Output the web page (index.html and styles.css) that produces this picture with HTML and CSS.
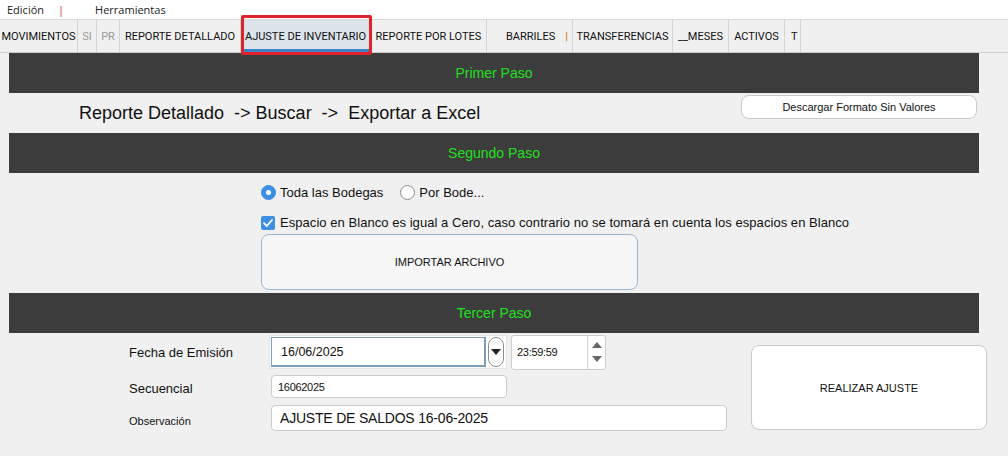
FILE: index.html
```html
<!DOCTYPE html>
<html lang="es">
<head>
<meta charset="utf-8">
<title>Ajuste de Inventario</title>
<link rel="stylesheet" href="styles.css">
</head>
<body>
<div class="menubar">
  <span class="menu-item">Edición</span>
  <span class="menu-sep">|</span>
  <span class="menu-item menu-tools">Herramientas</span>
</div>
<div class="tabbar">
  <div class="tab t-mov">MOVIMIENTOS</div>
  <div class="tab t-si dim">SI</div>
  <div class="tab t-pr dim">PR</div>
  <div class="tab t-det">REPORTE DETALLADO</div>
  <div class="tab t-aju active">AJUSTE DE INVENTARIO</div>
  <div class="tab t-lot">REPORTE POR LOTES</div>
  <div class="tab t-bar">BARRILES <span class="bar-sep">|</span></div>
  <div class="tab t-tra">TRANSFERENCIAS</div>
  <div class="tab t-mes">__MESES</div>
  <div class="tab t-act">ACTIVOS</div>
  <div class="tab t-t">T</div>
  <div class="highlight"></div>
</div>

<main class="content">
  <div class="step-header">Primer Paso</div>
  <div class="step1">
    <div class="flow-text">Reporte Detallado&nbsp; -&gt; Buscar&nbsp; -&gt;&nbsp; Exportar a Excel</div>
    <button class="btn btn-download">Descargar Formato Sin Valores</button>
  </div>

  <div class="step-header">Segundo Paso</div>
  <div class="step2">
    <div class="radio-row">
      <label class="radio"><span class="radio-dot checked"></span>Toda las Bodegas</label>
      <label class="radio"><span class="radio-dot"></span>Por Bode...</label>
    </div>
    <label class="check-row">
      <span class="checkbox">
        <svg viewBox="0 0 14 14" width="14" height="14"><path d="M3 7.2 L5.8 10 L11 4" fill="none" stroke="#fff" stroke-width="1.8" stroke-linecap="round" stroke-linejoin="round"/></svg>
      </span>
      Espacio en Blanco es igual a Cero, caso contrario no se tomará en cuenta los espacios en Blanco
    </label>
    <button class="btn btn-import">IMPORTAR ARCHIVO</button>
  </div>

  <div class="step-header">Tercer Paso</div>
  <div class="step3">
    <div class="form">
      <div class="form-row row-date">
        <div class="label">Fecha de Emisión</div>
        <div class="date-frame">
          <div class="date-input">16/06/2025</div>
          <div class="date-drop">
            <svg viewBox="0 0 10 6" width="10" height="6"><path d="M0 0 H10 L5 6 Z" fill="#222"/></svg>
          </div>
        </div>
        <div class="time-spin">
          <div class="time-value">23:59:59</div>
          <div class="spin-btns">
            <svg viewBox="0 0 10 6" width="10" height="6"><path d="M0 6 H10 L5 0 Z" fill="#666"/></svg>
            <svg viewBox="0 0 10 6" width="10" height="6"><path d="M0 0 H10 L5 6 Z" fill="#666"/></svg>
          </div>
        </div>
      </div>
      <div class="form-row row-seq">
        <div class="label">Secuencial</div>
        <div class="input input-seq">16062025</div>
      </div>
      <div class="form-row row-obs">
        <div class="label label-small">Observación</div>
        <div class="input input-obs">AJUSTE DE SALDOS 16-06-2025</div>
      </div>
    </div>
    <button class="btn btn-apply">REALIZAR AJUSTE</button>
  </div>
</main>
</body>
</html>
```

FILE: styles.css
```css
* { box-sizing: border-box; }

html, body {
  margin: 0;
  padding: 0;
  background: #f0f0f0;
  font-family: "Liberation Sans", Arial, sans-serif;
  color: #111;
  width: 1008px;
  height: 456px;
  overflow: hidden;
}

.menubar {
  height: 19px;
  background: #fff;
  display: flex;
  align-items: center;
  font-family: "Open Sans", "Liberation Sans", sans-serif;
  font-size: 11px;
  color: #222;
  padding-left: 7px;
}
.menu-sep { color: #c41e3a; margin-left: 14px; }
.menu-tools { margin-left: 31px; }

.tabbar {
  position: relative;
  height: 34px;
  border-top: 1px solid #d6d6d6;
  border-bottom: 1px solid #cfcfcf;
  background: #f0f0f0;
  display: flex;
  font-family: Roboto, "Liberation Sans", sans-serif;
  font-size: 11px;
  font-weight: 400;
  color: #111;
}
.tab {
  display: flex;
  align-items: center;
  justify-content: center;
  border-right: 1px solid #d4d4d4;
  white-space: nowrap;
}
.tab.dim { color: #9a9a9a; }
.t-mov { width: 78px; }
.t-si { width: 19px; }
.t-pr { width: 23px; }
.t-det { width: 121px; }
.t-aju { width: 130px; }
.t-lot { width: 116px; }
.t-bar { width: 86px; justify-content: flex-end; padding-right: 4px; }
.bar-sep { color: #d08020; margin-left: 10px; font-weight: 700; }
.t-tra { width: 100px; }
.t-mes { width: 56px; }
.t-act { width: 56px; }
.t-t { width: 16px; justify-content: flex-start; padding-left: 6px; }

.tab.active {
  background: #dce3ea;
  border-bottom: 3px solid #3b82c4;
  padding-top: 3px;
}

.highlight {
  position: absolute;
  left: 241px;
  top: -5px;
  width: 131px;
  height: 40px;
  border: 3px solid #e0232b;
  border-radius: 2px;
  pointer-events: none;
}

.content {
  margin-left: 9px;
  width: 970px;
}

.step-header {
  height: 40px;
  background: #3c3c3c;
  color: #1fe01f;
  font-size: 14px;
  display: flex;
  align-items: center;
  justify-content: center;
}

.btn {
  background: #fff;
  border: 1px solid #c9c9c9;
  border-radius: 8px;
  font-family: "Liberation Sans", Arial, sans-serif;
  font-size: 11px;
  color: #111;
  padding: 0;
  flex-shrink: 0;
}

.step1 {
  height: 40px;
  display: flex;
  justify-content: space-between;
  align-items: flex-start;
}
.flow-text {
  margin-left: 70px;
  margin-top: 10px;
  font-size: 18px;
  line-height: 20px;
  color: #111;
  white-space: pre;
}
.btn-download {
  margin-top: 2px;
  margin-right: 2px;
  width: 236px;
  height: 24px;
}

.step2 {
  height: 120px;
  padding-left: 252px;
  font-size: 13px;
  padding-top: 11px;
}
.radio-row {
  display: flex;
  align-items: center;
  height: 17px;
}
.radio {
  display: flex;
  align-items: center;
  margin-right: 17px;
}
.radio-dot {
  width: 15px;
  height: 15px;
  border-radius: 50%;
  border: 1px solid #8a8a8a;
  background: #fff;
  margin-right: 4px;
  position: relative;
}
.radio-dot.checked {
  background: #3d8fe3;
  border-color: #3d8fe3;
}
.radio-dot.checked::after {
  content: "";
  position: absolute;
  left: 4px;
  top: 4px;
  width: 5px;
  height: 5px;
  border-radius: 50%;
  background: #fff;
}
.check-row {
  display: flex;
  align-items: center;
  margin-top: 13px;
  height: 17px;
  letter-spacing: 0.05px;
}
.checkbox {
  width: 14px;
  height: 14px;
  border-radius: 2px;
  background: #3d8fe3;
  margin-right: 5px;
  display: flex;
}
.btn-import {
  display: block;
  margin-top: 3px;
  width: 377px;
  height: 56px;
  background: #f6f6f6;
  border-color: #9bb7d4;
}

.step3 {
  height: 123px;
  display: flex;
  align-items: flex-start;
}
.form {
  width: 742px;
  flex-shrink: 0;
  padding-top: 2px;
}
.form-row {
  display: flex;
  align-items: center;
}
.label {
  width: 262px;
  padding-left: 120px;
  font-size: 13px;
  color: #111;
}
.label-small { font-size: 11px; padding-top: 5px; }

.row-date { height: 34px; }
.date-frame {
  display: flex;
  align-items: center;
  width: 238px;
  height: 34px;
  background: #fff;
  padding: 2px 2px 2px 1px;
  margin-left: -2px;
  border: 1px solid #e4e4e4;
}
.date-input {
  width: 215px;
  height: 30px;
  border: 1px solid #7f9db9;
  border-width: 1px 2px 2px 1px;
  font-size: 12.5px;
  display: flex;
  align-items: center;
  padding-left: 9px;
}
.date-drop {
  width: 16px;
  height: 30px;
  border: 1px solid #8e8e8e;
  border-radius: 8px;
  margin-left: 2px;
  display: flex;
  align-items: center;
  justify-content: center;
}
.time-spin {
  margin-left: 4px;
  width: 95px;
  height: 35px;
  background: #fff;
  border: 1px solid #cdcdcd;
  border-radius: 3px;
  display: flex;
}
.time-value {
  width: 76px;
  border-right: 1px solid #d4d4d4;
  font-size: 11px;
  display: flex;
  align-items: center;
  padding-left: 5px;
  letter-spacing: -0.3px;
}
.spin-btns {
  flex: 1;
  display: flex;
  flex-direction: column;
  align-items: center;
  justify-content: center;
  gap: 8px;
}

.input {
  background: #fff;
  border: 1px solid #cbcbcb;
  border-radius: 4px;
  display: flex;
  align-items: center;
}
.row-seq { margin-top: 6px; }
.row-seq .label { padding-top: 3px; }
.input-seq {
  width: 236px;
  height: 23px;
  font-size: 11px;
  padding-left: 6px;
  letter-spacing: -0.3px;
}
.row-obs { margin-top: 7px; }
.input-obs {
  width: 456px;
  height: 26px;
  font-family: "Liberation Sans", Arial, sans-serif;
  font-size: 14px;
  padding-left: 8px;
  letter-spacing: -0.2px;
}

.btn-apply {
  margin-top: 12px;
  width: 236px;
  height: 85px;
}
```
